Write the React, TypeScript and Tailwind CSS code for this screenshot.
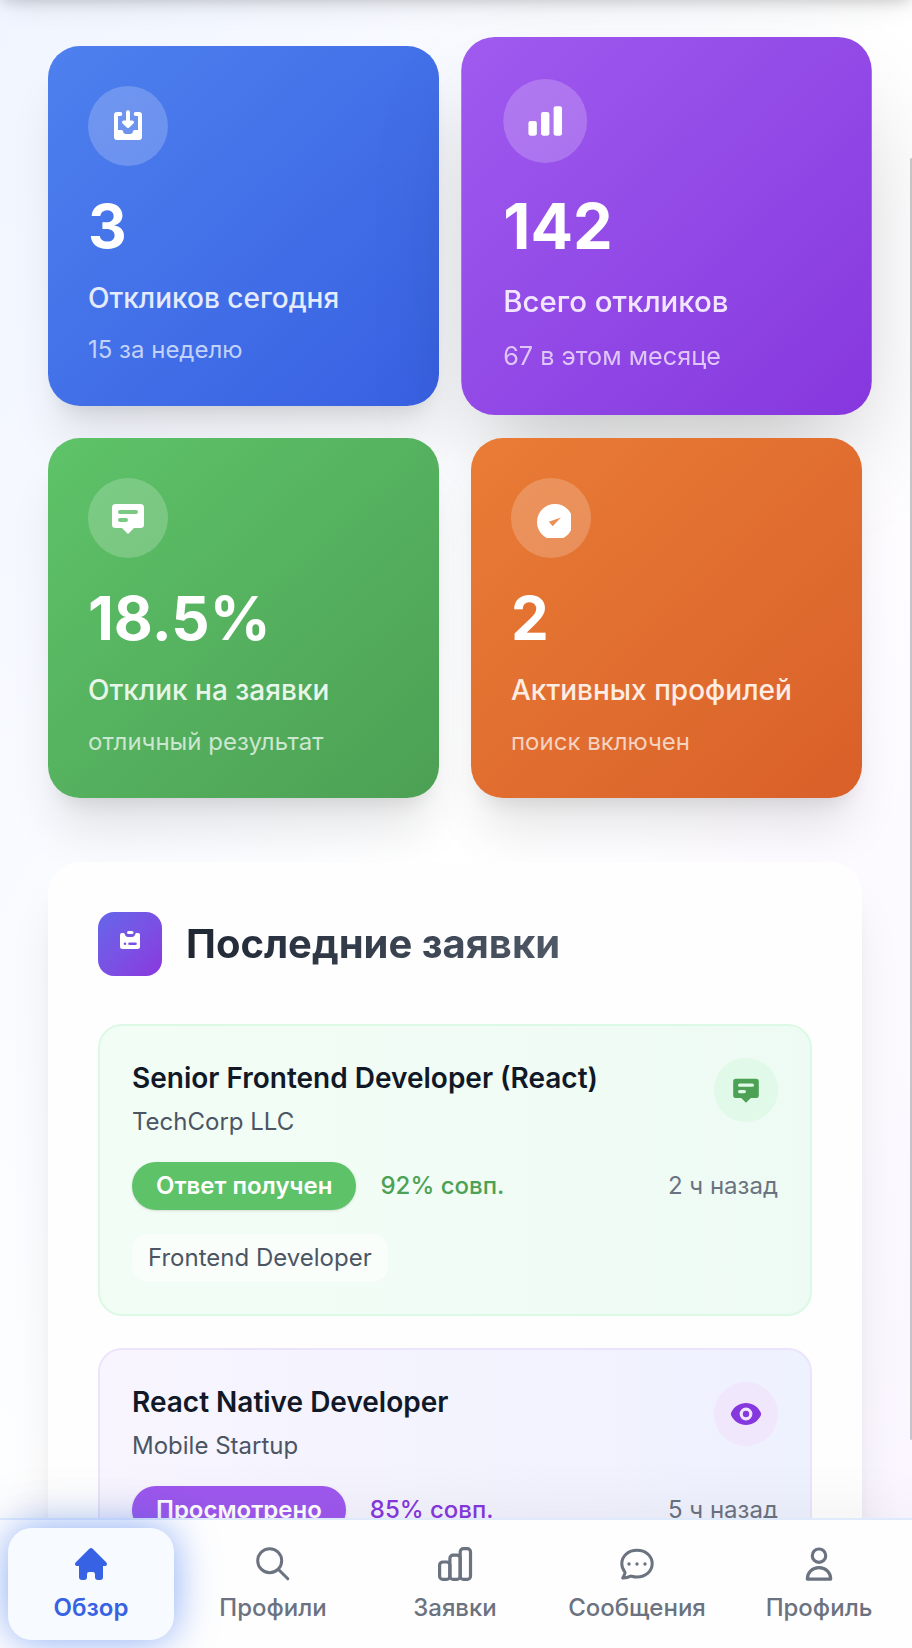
import React from "react";

type IconProps = { className?: string };

function InboxIcon({ className }: IconProps) {
  return (
    <svg viewBox="0 0 40 40" className={className} fill="currentColor" aria-hidden="true">
      <path d="M9 6h3.300a2 2 0 0 1 0 4H10v14h3.500q1.600 0 1.600 1.600 0 2.400 2.400 2.400h5q2.400 0 2.400-2.400 0-1.600 1.600-1.600H30V10h-2.300a2 2 0 0 1 0-4H31Q34 6 34 9V31q0 3-3 3H9q-3 0-3-3V9Q6 6 9 6Z" />
      <path d="M18 6.300a2 2 0 0 1 4 0V14.500h2.300q1.700.2 1.700 1.700 0 .8-.6 1.300l-4.200 4q-1.200 1-2.400 0l-4.200-4q-.6-.5-.6-1.300 0-1.500 1.700-1.700H18Z" />
    </svg>
  );
}

function BarsIcon({ className }: IconProps) {
  return (
    <svg viewBox="0 0 40 40" className={className} fill="currentColor" aria-hidden="true">
      <rect x="4" y="20" width="8" height="14" rx="2" />
      <rect x="16" y="11.500" width="8" height="22.500" rx="2" />
      <rect x="28" y="6" width="8" height="28" rx="2" />
    </svg>
  );
}

function MessageIcon({ className }: IconProps) {
  return (
    <svg viewBox="0 0 40 40" className={className} fill="currentColor" aria-hidden="true">
      <path
        fillRule="evenodd"
        d="M7.500 6h25a3.500 3.500 0 0 1 3.500 3.500v17a3.500 3.500 0 0 1-3.500 3.500H26l-6 6-6-6H7.500a3.500 3.500 0 0 1-3.500-3.500v-17a3.500 3.500 0 0 1 3.500-3.500Zm4.500 6a2 2 0 0 0 0 4h16a2 2 0 0 0 0-4H12Zm0 8a2 2 0 0 0 0 4h6a2 2 0 0 0 0-4h-6Z"
      />
    </svg>
  );
}

function GaugeIcon({ className }: IconProps) {
  return (
    <svg viewBox="0 0 40 40" className={className} fill="currentColor" aria-hidden="true">
      <path
        fillRule="evenodd"
        d="M24 6a18 18 0 1 0 0 36a18 18 0 1 0 0-36ZM17.800 23.800 30 19.600 21.700 28.200Z"
      />
    </svg>
  );
}

function ClipboardIcon({ className }: IconProps) {
  return (
    <svg viewBox="0 0 24 24" className={className} fill="currentColor" aria-hidden="true">
      <rect x="9" y="3" width="6.500" height="3" rx="1.500" />
      <path
        fillRule="evenodd"
        d="M3.800 5h1.600q.9 0 1.200.8Q7.600 9 10 9h4q2.400 0 3.400-3.200.3-.8 1.200-.8h1.600Q22 5 22 6.800V18.500Q22 21 19.500 21h-15Q2 21 2 18.500V6.800Q2 5 3.800 5ZM7 14.500a1.300 1.300 0 1 0 0 2.600a1.300 1.300 0 1 0 0-2.600Zm4.500 0a1.300 1.300 0 0 0 0 2.600h6a1.300 1.300 0 0 0 0-2.600h-6Z"
      />
    </svg>
  );
}

function EyeIcon({ className }: IconProps) {
  return (
    <svg viewBox="0 0 32 32" className={className} fill="currentColor" aria-hidden="true">
      <path
        fillRule="evenodd"
        d="M16 5C9.500 5 4.300 8.500 1.300 14.200q-.9 1.800 0 3.600C4.300 23.500 9.500 27 16 27s11.700-3.500 14.700-9.200q.9-1.800 0-3.600C27.700 8.500 22.500 5 16 5Zm0 4.600a6.400 6.400 0 1 0 0 12.800a6.400 6.400 0 1 0 0-12.800Z"
      />
      <circle cx="16" cy="16" r="3.200" />
    </svg>
  );
}

function HomeIcon({ className }: IconProps) {
  return (
    <svg viewBox="0 0 40 40" className={className} fill="currentColor" aria-hidden="true">
      <path d="M18.300 4.700q1.700-1.400 3.400 0L35.200 18.300q1.300 1.400.6 2.700-.6 1.200-2.200 1H32V33q0 3-3 3h-2q-3 0-3-3v-2.800q0-2.200-2.200-2.200h-3.600Q16 28 16 30.200V33q0 3-3 3h-2q-3 0-3-3V22H6.400q-1.600.2-2.200-1-.7-1.300.6-2.700Z" />
    </svg>
  );
}

function SearchIcon({ className }: IconProps) {
  return (
    <svg viewBox="0 0 40 40" className={className} fill="none" stroke="currentColor" strokeWidth="3" strokeLinecap="round" aria-hidden="true">
      <circle cx="16.700" cy="16.700" r="12" />
      <path d="m25.500 25.500 9.300 9.300" />
    </svg>
  );
}

function BarsOutlineIcon({ className }: IconProps) {
  return (
    <svg viewBox="0 0 40 40" className={className} fill="none" stroke="currentColor" strokeWidth="3.200" aria-hidden="true">
      <rect x="4.600" y="18" width="10.300" height="17.400" rx="3.200" />
      <rect x="14.900" y="11.200" width="10.300" height="24.200" rx="3.200" />
      <rect x="25.200" y="4.600" width="10.300" height="30.800" rx="3.200" />
    </svg>
  );
}

function ChatIcon({ className }: IconProps) {
  return (
    <svg viewBox="0 0 40 40" className={className} fill="none" stroke="currentColor" strokeWidth="3" strokeLinejoin="round" strokeLinecap="round" aria-hidden="true">
      <path d="M20 6.200C11.300 6.200 4.800 11.900 4.800 19.600c0 3.200 1 5.900 2.900 8.100q.6.8.2 1.900c-.5 1.400-1.200 2.600-2.200 4.300 3 .1 5.300-.4 7.300-1.500q.8-.5 1.800-.1c1.600.5 3.400.8 5.200.8 8.700 0 15.200-5.800 15.200-13.500S28.700 6.200 20 6.200Z" />
      <g fill="currentColor" stroke="none">
        <circle cx="12" cy="20" r="1.700" />
        <circle cx="20" cy="20" r="1.700" />
        <circle cx="28" cy="20" r="1.700" />
      </g>
    </svg>
  );
}

function UserIcon({ className }: IconProps) {
  return (
    <svg viewBox="0 0 40 40" className={className} fill="none" stroke="currentColor" strokeWidth="3.200" strokeLinejoin="round" aria-hidden="true">
      <circle cx="20" cy="11.700" r="6.700" />
      <path d="M20 23.600c-6.700 0-11.700 4.900-11.700 11.500h23.400c0-6.600-5-11.500-11.700-11.500Z" />
    </svg>
  );
}

const stats = [
  { value: "3", label: "Откликов сегодня", note: "15 за неделю", Icon: InboxIcon, tone: "bg-linear-to-br from-[#4e80ee] to-[#3860e2]", labelTone: "text-[#e4ebfc]", noteTone: "text-[#c3d2f8]", shadow: "shadow-[0_40px_50px_-10px_rgb(0_0_0/0.1),0_16px_20px_-12px_rgb(0_0_0/0.1)]" },
  { value: "142", label: "Всего откликов", note: "67 в этом месяце", Icon: BarsIcon, tone: "scale-105 bg-linear-to-br from-[#9f5aef] to-[#8637de]", labelTone: "text-[#f1e6fd]", noteTone: "text-[#dec6f8]", shadow: "shadow-[0_50px_100px_-24px_rgb(0_0_0/0.25)]" },
  { value: "18.5%", label: "Отклик на заявки", note: "отличный результат", Icon: MessageIcon, tone: "bg-linear-to-br from-[#5ec369] to-[#4ca054]", labelTone: "text-[#e8f5e9]", noteTone: "text-[#cce7cf]", shadow: "shadow-[0_40px_50px_-10px_rgb(0_0_0/0.1),0_16px_20px_-12px_rgb(0_0_0/0.1)]" },
  { value: "2", label: "Активных профилей", note: "поиск включен", Icon: GaugeIcon, tone: "bg-linear-to-br from-[#e97c36] to-[#d96029]", labelTone: "text-[#fcece4]", noteTone: "text-[#f6d2c0]", shadow: "shadow-[0_40px_50px_-10px_rgb(0_0_0/0.1),0_16px_20px_-12px_rgb(0_0_0/0.1)]" },
];

const applications = [
  { title: "Senior Frontend Developer (React)", company: "TechCorp LLC", status: "Ответ получен", match: "92% совп.", time: "2 ч назад", profile: "Frontend Developer", Icon: MessageIcon, card: "border-[#dcf9e5] bg-linear-to-r from-[#f2fdf5] to-[#eefbf4]", circle: "bg-[#e1f9e8] text-[#4da155]", badge: "bg-[#5ec269]", matchTone: "text-[#4da155]" },
  { title: "React Native Developer", company: "Mobile Startup", status: "Просмотрено", match: "85% совп.", time: "5 ч назад", profile: "Mobile Developer", Icon: EyeIcon, card: "border-[#ebe4fc] bg-linear-to-r from-[#f8f5fe] to-[#eef1fe]", circle: "bg-[#f1e7fc] text-[#8638df]", badge: "bg-[#9e58ee]", matchTone: "text-[#8638df]" },
];

const tabs = [
  { label: "Обзор", Icon: HomeIcon, active: true },
  { label: "Профили", Icon: SearchIcon, active: false },
  { label: "Заявки", Icon: BarsOutlineIcon, active: false },
  { label: "Сообщения", Icon: ChatIcon, active: false },
  { label: "Профиль", Icon: UserIcon, active: false },
];

export default function App() {
  return (
    <div className="relative flex h-screen flex-col overflow-hidden bg-linear-to-br from-[#f0f5ff] via-white to-[#faf5ff] font-['Inter',sans-serif] antialiased">
      <header className="relative z-20 -mt-16 h-16 shrink-0 bg-white shadow-[0_10px_30px_-6px_rgb(0_0_0/0.1),0_4px_12px_-2px_rgb(0_0_0/0.14)]" />
      <main className="min-h-0 flex-1 overflow-y-auto pr-[2px] [scrollbar-width:none]">
        <div className="flex flex-col gap-16 px-12 pt-[46px] pb-12">
          <section aria-label="Статистика" className="grid grid-cols-2 gap-8">
            {stats.map(({ value, label, note, Icon, tone, labelTone, noteTone, shadow }) => (
              <article key={label} className={`relative rounded-[32px] p-10 text-white ${tone} ${shadow}`}>
                <div className="flex size-20 items-center justify-center rounded-full bg-white/20">
                  <Icon className="size-10" />
                </div>
                <p className="mt-6 text-[60px] leading-[72px] font-bold">{value}</p>
                <p className={`mt-4 text-[28px] leading-10 font-medium ${labelTone}`}>{label}</p>
                <p className={`mt-4 text-2xl leading-8 ${noteTone}`}>{note}</p>
              </article>
            ))}
          </section>

          <section className="relative rounded-[32px] bg-[#fefefe] p-[50px] shadow-[0_40px_50px_-10px_rgb(0_0_0/0.1),0_16px_20px_-12px_rgb(0_0_0/0.08)]">
            <div className="flex items-center gap-6">
              <div className="flex size-16 items-start justify-center rounded-2xl bg-linear-to-br from-[#6366ea] to-[#8a37de] pt-4 text-white">
                <ClipboardIcon className="size-6" />
              </div>
              <h2 className="bg-linear-to-r from-[#1f2735] to-[#4f5866] bg-clip-text text-[40px] leading-[56px] font-bold text-transparent">
                Последние заявки
              </h2>
            </div>
            <ul className="mt-12 flex flex-col gap-8">
              {applications.map(({ title, company, status, match, time, profile, Icon, card, circle, badge, matchTone }) => (
                <li key={title} className={`rounded-3xl border-2 p-8 ${card}`}>
                  <div className="flex items-start justify-between">
                    <div>
                      <h3 className="text-[28px] leading-10 font-semibold text-[#111827]">{title}</h3>
                      <p className="mt-2 text-2xl leading-8 text-[#4b5563]">{company}</p>
                    </div>
                    <div className={`flex size-16 items-center justify-center rounded-full ${circle}`}>
                      <Icon className="size-8" />
                    </div>
                  </div>
                  <div className="mt-6 flex items-center justify-between">
                    <div className="flex items-center gap-6">
                      <span className={`rounded-full px-6 py-2 text-2xl leading-8 font-semibold text-white shadow-sm ${badge}`}>{status}</span>
                      <span className={`text-2xl leading-8 font-medium ${matchTone}`}>{match}</span>
                    </div>
                    <span className="text-2xl leading-8 text-[#6b7280]">{time}</span>
                  </div>
                  <div className="mt-6 flex">
                    <span className="rounded-2xl bg-white/60 px-4 py-2 text-2xl leading-8 text-[#4b5563]">{profile}</span>
                  </div>
                </li>
              ))}
            </ul>
          </section>
        </div>
      </main>
      <div className="absolute top-[158px] right-0 bottom-[208px] w-[2px] rounded-full bg-[#c4c5c6]" />
      <nav className="relative z-20 grid shrink-0 grid-cols-5 border-t-2 border-[#dfeafd] bg-[#fefefe] pr-[2px] shadow-[0_-10px_60px_rgb(0_0_0/0.05)]">
        {tabs.map(({ label, Icon, active }) => (
          <button
            key={label}
            type="button"
            aria-current={active ? "page" : undefined}
            className={`m-2 flex flex-col items-center gap-2 rounded-3xl py-4 text-2xl leading-8 ${
              active
                ? "bg-[#f7faff] font-semibold text-[#3662e3] shadow-[0_0_40px_rgb(59_113_240/0.6)]"
                : "font-medium text-[#6b7280]"
            }`}
          >
            <Icon className="size-10" />
            {label}
          </button>
        ))}
      </nav>
    </div>
  );
}
